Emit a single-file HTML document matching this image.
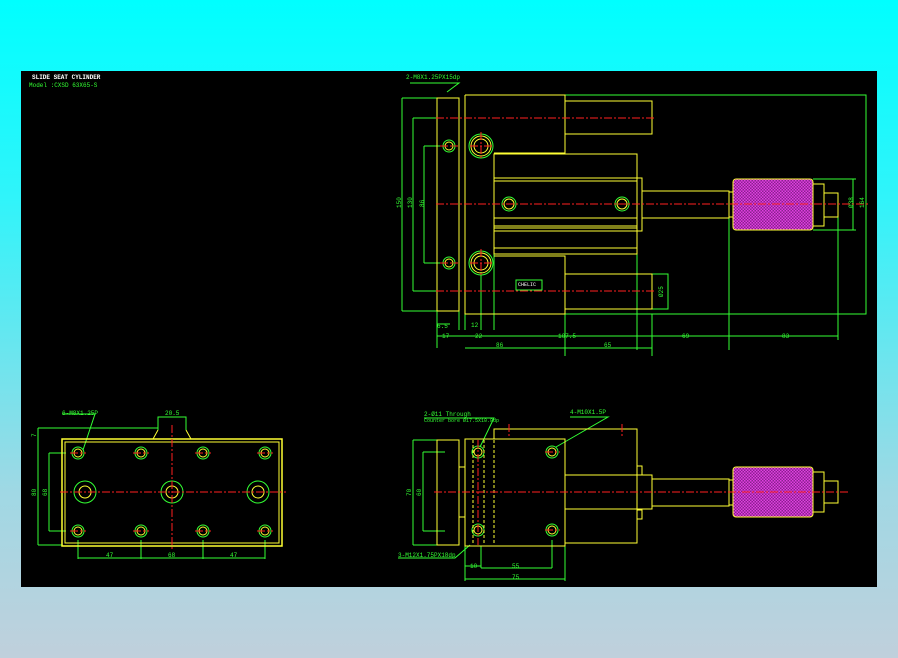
<!DOCTYPE html>
<html><head><meta charset="utf-8"><style>
html,body{margin:0;padding:0;width:898px;height:658px;overflow:hidden;background:linear-gradient(180deg,#00ffff 0%,#30f4fa 30%,#a0d8e4 75%,#c0d0dc 100%);}
svg{position:absolute;left:0;top:0}
text{font-family:"Liberation Mono",monospace;font-size:6px;fill:#33ff33}
</style></head><body>
<svg width="898" height="658" viewBox="0 0 898 658">
<defs>
<pattern id="k" width="3" height="3" patternUnits="userSpaceOnUse"><rect width="3" height="3" fill="#8a2090"/><rect width="1.5" height="1.5" fill="#e040e0"/><rect x="1.5" y="1.5" width="1.5" height="1.5" fill="#e040e0"/></pattern>
</defs>
<rect x="21" y="71" width="856" height="516" fill="#000"/>
<text x="32" y="79" style="fill:#fff;font-size:6px;font-weight:bold">SLIDE SEAT CYLINDER</text>
<text x="29" y="87" style="font-size:6px">Model :CXSD 63X65-S</text>

<!-- TOP VIEW -->
<g fill="none" stroke="#33ff33" stroke-width="1">
<path d="M402 98V311M402 98H437M402 311H437M413 118V291M413 118H437M413 291H437M424 146V263M424 146H445M424 263H445"/>
<path d="M465 95H866V314H465M566 101H652"/>
<path d="M437 311V348M459 311V330M465 314V330M481 272V330M494 254V330M565 314V356M637 254V350M729 218V350M838 203V340M652 314V356"/>
<path d="M437 324H450M437 336H838M465 348H652M853 179V230M813 179H856M813 230H856M866 179V230"/>
<path d="M652 274H668V309H652"/>
<path d="M447 92L459 83H410"/>
<circle cx="449" cy="146" r="6"/><circle cx="449" cy="263" r="6"/>
<circle cx="481" cy="146" r="12"/><circle cx="481" cy="263" r="12"/>
<circle cx="509" cy="204" r="7"/><circle cx="622" cy="204" r="7"/>
</g>
<g fill="none" stroke="#ffff33" stroke-width="1">
<rect x="437" y="98" width="22" height="213"/>
<path d="M465 95H565V153H494M465 95V314H565V256H494"/>
<rect x="565" y="101" width="87" height="33"/>
<rect x="565" y="274" width="87" height="35"/>
<rect x="494" y="154" width="143" height="100"/>
<path d="M494 178H637M494 181H637M494 218H637M494 226H637M494 228H637M494 231H637M494 248H637"/>
<rect x="637" y="178" width="5" height="53"/>
<rect x="642" y="191" width="87" height="27"/>
<rect x="729" y="192" width="4" height="25"/>
<rect x="813" y="184" width="11" height="42"/>
<rect x="824" y="193" width="14" height="24"/>
<circle cx="449" cy="146" r="4"/><circle cx="449" cy="263" r="4"/>
<circle cx="481" cy="146" r="10"/><circle cx="481" cy="146" r="7"/>
<circle cx="481" cy="263" r="10"/><circle cx="481" cy="263" r="7"/>
<circle cx="509" cy="204" r="5"/><circle cx="622" cy="204" r="5"/>
</g>
<rect x="733" y="179" width="80" height="51" rx="3" fill="url(#k)" stroke="#ffff33"/>
<rect x="516" y="280" width="26" height="10" fill="none" stroke="#33ff33"/>
<text x="518" y="286" style="font-size:5px;fill:#fff">CHELIC</text>
<g stroke="#ff2020" stroke-width="1" stroke-dasharray="8,2,2,2" fill="none">
<path d="M436 204H870M436 118H655M436 291H655M481 132V160M481 249V277M440 146H458M440 263H458M470 146H492M470 263H492"/>
</g>
<text x="406" y="79">2-M8X1.25PX15dp</text>
<text x="437" y="328">6.5</text><text x="442" y="338">17</text><text x="471" y="327">12</text><text x="475" y="338">22</text>
<text x="558" y="338">107.5</text><text x="682" y="338">69</text><text x="782" y="338">83</text>
<text x="496" y="347">86</text><text x="604" y="347">65</text>
<text transform="translate(401,208) rotate(-90)">150</text>
<text transform="translate(412,208) rotate(-90)">130</text>
<text transform="translate(424,207) rotate(-90)">86</text>
<text transform="translate(864,208) rotate(-90)">164</text>
<text transform="translate(853,208) rotate(-90)">Ø38</text>
<text transform="translate(663,297) rotate(-90)">Ø25</text>

<!-- BOTTOM LEFT -->
<g fill="none" stroke="#33ff33">
<path d="M38 428V545M38 428H158M38 545H62M49 453V531M49 453H66M49 531H66M78 540V559M141 540V559M203 540V559M265 540V559M78 558H265M158 430V417H186V430M62 414H95L83 450"/>
<circle cx="78" cy="453" r="6"/><circle cx="141" cy="453" r="6"/><circle cx="203" cy="453" r="6"/><circle cx="265" cy="453" r="6"/>
<circle cx="78" cy="531" r="6"/><circle cx="141" cy="531" r="6"/><circle cx="203" cy="531" r="6"/><circle cx="265" cy="531" r="6"/>
</g>
<g fill="none" stroke="#ffff33">
<rect x="62" y="439" width="220" height="107" stroke-width="1.5"/>
<rect x="65" y="442" width="214" height="101"/>
<circle cx="78" cy="453" r="4"/><circle cx="141" cy="453" r="4"/><circle cx="203" cy="453" r="4"/><circle cx="265" cy="453" r="4"/>
<circle cx="78" cy="531" r="4"/><circle cx="141" cy="531" r="4"/><circle cx="203" cy="531" r="4"/><circle cx="265" cy="531" r="4"/>
<circle cx="85" cy="492" r="6"/><circle cx="172" cy="492" r="6"/><circle cx="258" cy="492" r="6"/>
<path d="M153 439L158 430M186 430L191 439"/>
</g>
<g fill="none" stroke="#33ff33"><circle cx="85" cy="492" r="11"/><circle cx="172" cy="492" r="11"/><circle cx="258" cy="492" r="11"/></g>
<g stroke="#ff2020" stroke-dasharray="8,2,2,2" fill="none">
<path d="M60 492H286M172 425V550M70 453H86M133 453H149M195 453H211M257 453H273M70 531H86M133 531H149M195 531H211M257 531H273"/>
</g>
<text x="62" y="415">6-M8X1.25P</text><text x="165" y="415">20.5</text>
<text x="106" y="557">47</text><text x="168" y="557">68</text><text x="230" y="557">47</text>
<text transform="translate(36,496) rotate(-90)">80</text>
<text transform="translate(47,496) rotate(-90)">68</text>
<text transform="translate(36,437) rotate(-90)">7</text>

<!-- BOTTOM RIGHT -->
<g fill="none" stroke="#33ff33">
<path d="M413 440V545M413 440H437M413 545H437M423 452V531M423 452H445M423 531H445M465 546V581M481 546V568M565 546V581M552 540V568M465 566H481M481 568H552M465 579H565M398 558H455L470 545M424 418H494L480 447M570 417H608L556 447"/>
<circle cx="478" cy="452" r="6"/><circle cx="478" cy="530" r="6"/>
<circle cx="552" cy="452" r="6"/><circle cx="552" cy="530" r="6"/>
</g>
<g fill="none" stroke="#ffff33">
<rect x="437" y="440" width="22" height="105"/>
<rect x="459" y="467" width="6" height="50"/>
<rect x="465" y="439" width="100" height="107"/>
<path d="M494 439V429H637V543H565"/>
<rect x="565" y="475" width="87" height="34"/>
<rect x="637" y="466" width="5" height="9"/><rect x="637" y="510" width="5" height="9"/>
<rect x="652" y="479" width="77" height="27"/>
<rect x="729" y="480" width="4" height="25"/>
<rect x="813" y="472" width="11" height="40"/>
<rect x="824" y="481" width="14" height="22"/>
<circle cx="478" cy="452" r="4"/><circle cx="478" cy="530" r="4"/>
<circle cx="552" cy="452" r="4"/><circle cx="552" cy="530" r="4"/>
<path d="M473 440V545M484 440V545M494 440V545" stroke-dasharray="3,2"/>
</g>
<rect x="733" y="467" width="80" height="50" rx="3" fill="url(#k)" stroke="#ffff33"/>
<g stroke="#ff2020" stroke-dasharray="8,2,2,2" fill="none">
<path d="M434 492H848M478 440V545M509 424V436M622 424V436M545 452H560M545 530H560"/>
</g>
<text x="424" y="416">2-Ø11 Through</text><text x="424" y="422" style="font-size:5px">Counter bore Ø17.5X10.8dp</text>
<text x="570" y="414">4-M10X1.5P</text>
<text x="398" y="557">3-M12X1.75PX18dp</text>
<text x="470" y="568">10</text><text x="512" y="568">55</text><text x="512" y="579">75</text>
<text transform="translate(411,496) rotate(-90)">70</text>
<text transform="translate(421,496) rotate(-90)">60</text>
</svg>
</body></html>
